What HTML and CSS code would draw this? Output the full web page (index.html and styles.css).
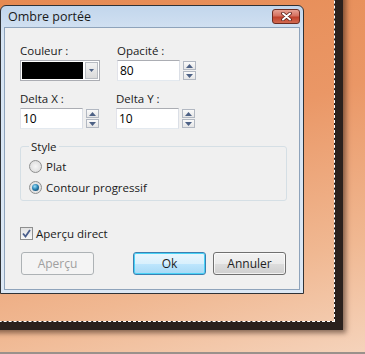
FILE: index.html
```html
<!DOCTYPE html>
<html lang="fr">
<head>
    <meta charset="UTF-8">
    <meta name="viewport" content="width=device-width, initial-scale=1.0">
    <title>Ombre portée</title>
    <link rel="stylesheet" href="styles.css">
</head>
<body>
    <div class="desktop">
        <!-- image being edited, only its lower right corner is visible -->
        <div class="canvas"></div>

        <div class="window">
            <div class="titlebar">
                <span class="title">Ombre portée</span>
                <button class="close" type="button" aria-label="Fermer">
                    <svg width="11" height="9" viewBox="0 0 11 9">
                        <path d="M2 1.5 L9 7.5 M9 1.5 L2 7.5" stroke="#5a1f18" stroke-width="3.6" stroke-linecap="round"/>
                        <path d="M2 1.5 L9 7.5 M9 1.5 L2 7.5" stroke="#fff" stroke-width="2" stroke-linecap="round"/>
                    </svg>
                </button>
            </div>

            <div class="content">
                <div class="row">
                    <div class="field">
                        <label>Couleur :</label>
                        <div class="combo">
                            <span class="swatch"></span>
                            <span class="drop">
                                <svg width="5" height="3" viewBox="0 0 5 3"><path d="M0 0 H5 L2.5 3 Z" fill="#4d6185"/></svg>
                            </span>
                        </div>
                    </div>
                    <div class="field">
                        <label>Opacité :</label>
                        <div class="spin">
                            <input type="text" value="80">
                            <div class="arrows">
                                <span class="arrow"><svg width="7" height="4" viewBox="0 0 7 4"><path d="M0 4 H7 L3.5 0 Z" fill="#4d6185"/></svg></span>
                                <span class="arrow"><svg width="7" height="4" viewBox="0 0 7 4"><path d="M0 0 H7 L3.5 4 Z" fill="#4d6185"/></svg></span>
                            </div>
                        </div>
                    </div>
                </div>

                <div class="row">
                    <div class="field">
                        <label>Delta X :</label>
                        <div class="spin">
                            <input type="text" value="10">
                            <div class="arrows">
                                <span class="arrow"><svg width="7" height="4" viewBox="0 0 7 4"><path d="M0 4 H7 L3.5 0 Z" fill="#4d6185"/></svg></span>
                                <span class="arrow"><svg width="7" height="4" viewBox="0 0 7 4"><path d="M0 0 H7 L3.5 4 Z" fill="#4d6185"/></svg></span>
                            </div>
                        </div>
                    </div>
                    <div class="field">
                        <label>Delta Y :</label>
                        <div class="spin">
                            <input type="text" value="10">
                            <div class="arrows">
                                <span class="arrow"><svg width="7" height="4" viewBox="0 0 7 4"><path d="M0 4 H7 L3.5 0 Z" fill="#4d6185"/></svg></span>
                                <span class="arrow"><svg width="7" height="4" viewBox="0 0 7 4"><path d="M0 0 H7 L3.5 4 Z" fill="#4d6185"/></svg></span>
                            </div>
                        </div>
                    </div>
                </div>

                <fieldset class="group">
                    <legend>Style</legend>
                    <div class="option"><span class="radio"></span>Plat</div>
                    <div class="option"><span class="radio checked"></span>Contour progressif</div>
                </fieldset>

                <div class="check-row">
                    <span class="checkbox">
                        <svg width="9" height="9" viewBox="0 0 9 9"><path d="M1 4.5 L3.5 7.5 L8 1" fill="none" stroke="#4a5e8c" stroke-width="1.8"/></svg>
                    </span>
                    Aperçu direct
                </div>

                <div class="buttons">
                    <button class="btn disabled" type="button">Aperçu</button>
                    <button class="btn default" type="button">Ok</button>
                    <button class="btn" type="button">Annuler</button>
                </div>
            </div>
        </div>
    </div>
    <div class="bottom-line"></div>
</body>
</html>
```

FILE: styles.css
```css
html, body {
    margin: 0;
    padding: 0;
}

body {
    width: 365px;
    height: 354px;
    overflow: hidden;
    font-family: "Open Sans", "Noto Sans", sans-serif;
    font-size: 11.5px;
    color: #1a1a1a;
    background: #9a918b;
}

.desktop {
    position: relative;
    height: 352px;
    overflow: hidden;
    background: linear-gradient(165deg, #e68a52 0%, #ea9766 40%, #f0b892 75%, #f5d3bb 100%);
}

.canvas {
    position: absolute;
    left: -20px;
    top: -20px;
    width: 354px;
    height: 341px;
    border-right: 9px solid #2b211d;
    border-bottom: 9px solid #2b211d;
    box-shadow: 3px 3px 5px rgba(50, 30, 20, 0.55);
}

.canvas::after {
    content: "";
    position: absolute;
    right: -1px;
    bottom: -1px;
    width: 400px;
    height: 400px;
    border-right: 1px dashed #fff;
    border-bottom: 1px dashed #fff;
}

.window {
    position: absolute;
    left: 0;
    top: 5px;
    width: 304px;
    height: 289px;
    box-sizing: border-box;
    border: 1px solid #2f3236;
    border-radius: 6px 6px 0 0;
    background: linear-gradient(#c2d6ec, #d6e4f3 30px, #dce8f5);
    display: flex;
    flex-direction: column;
}

.titlebar {
    height: 21px;
    display: flex;
    justify-content: space-between;
    align-items: flex-start;
    padding-left: 7px;
}

.title {
    font-size: 12.5px;
    line-height: 21px;
}

.close {
    margin: 3px 3px 0 0;
    width: 28px;
    height: 15px;
    padding: 0;
    border: 1px solid #6c2c22;
    border-radius: 3px;
    background: linear-gradient(#e7a193, #d57160 45%, #c0412c 55%, #d26a50);
    display: flex;
    align-items: center;
    justify-content: center;
}

.content {
    flex: 1;
    margin: 0 3px 3px 3px;
    border: 1px solid #8ea3bb;
    background: #f0f0f0;
    padding: 15px 0 0 15px;
}

.row {
    display: flex;
    gap: 17px;
    margin-bottom: 10px;
}

.field label {
    display: block;
    line-height: 15px;
    margin-bottom: 2px;
}

.combo {
    width: 80px;
    height: 21px;
    box-sizing: border-box;
    border: 1px solid #abadb3;
    background: #fff;
    display: flex;
    align-items: center;
    padding: 1px;
    gap: 2px;
}

.swatch {
    width: 62px;
    height: 17px;
    background: #000;
}

.drop {
    width: 13px;
    height: 17px;
    box-sizing: border-box;
    border: 1px solid #b8bcc2;
    background: linear-gradient(#f2f2f2, #dadada);
    display: flex;
    align-items: center;
    justify-content: center;
}

.spin {
    display: flex;
    gap: 3px;
}

.spin input {
    width: 63px;
    height: 21px;
    box-sizing: border-box;
    border: 1px solid #abadb3;
    border-color: #abadb3 #dbdfe6 #e3e9ef #e2e3ea;
    padding: 0 2px;
    font: inherit;
    font-size: 12px;
    color: #000;
    background: #fff;
    outline: none;
}

.arrows {
    display: flex;
    flex-direction: column;
    gap: 1px;
    padding-top: 1px;
}

.arrow {
    width: 13px;
    height: 9px;
    box-sizing: border-box;
    border: 1px solid #b2b8c2;
    background: linear-gradient(#fafafa, #e6e6e6);
    display: flex;
    align-items: center;
    justify-content: center;
}

.group {
    width: 267px;
    height: 62px;
    box-sizing: border-box;
    margin: 0;
    border: 1px solid #d5dfe5;
    border-radius: 3px;
    padding: 2px 8px 4px 8px;
}

.group legend {
    padding: 0 2px;
    line-height: 15px;
}

.option {
    display: flex;
    align-items: center;
    gap: 4px;
    height: 21px;
}

.radio {
    width: 13px;
    height: 13px;
    box-sizing: border-box;
    border-radius: 50%;
    border: 1px solid #8e8f8f;
    background: radial-gradient(circle at 50% 50%, #f6f6f6, #d6d6d6);
    display: flex;
    align-items: center;
    justify-content: center;
}

.radio.checked::after {
    content: "";
    width: 7px;
    height: 7px;
    border-radius: 50%;
    background: radial-gradient(circle at 40% 35%, #9ee0fa, #2d86b6 45%, #0e3c5e 90%);
}

.check-row {
    display: flex;
    align-items: center;
    gap: 3px;
    margin-top: 25px;
}

.checkbox {
    width: 13px;
    height: 13px;
    box-sizing: border-box;
    border: 1px solid #8e8f8f;
    background: linear-gradient(#e3e3e3, #f8f8f8);
    display: flex;
    align-items: center;
    justify-content: center;
}

.buttons {
    display: flex;
    margin-top: 11px;
    margin-left: 1px;
}

.btn {
    width: 73px;
    height: 23px;
    box-sizing: border-box;
    font: inherit;
    font-size: 12px;
    color: #1e1e1e;
    border: 1px solid #707070;
    border-radius: 3px;
    background: linear-gradient(#f2f2f2 0%, #ebebeb 50%, #dddddd 51%, #cfcfcf 100%);
    box-shadow: inset 0 0 0 1px rgba(255, 255, 255, 0.7);
    padding: 0;
}

.btn.disabled {
    color: #a0a0a0;
    border-color: #adb2b5;
    background: #f4f4f4;
    box-shadow: none;
}

.btn.default {
    margin-left: 39px;
    margin-right: 7px;
    border-color: #3c7fb1;
    background: linear-gradient(#eaf6fd 0%, #d9f0fc 50%, #bee6fd 51%, #a7d9f5 100%);
    box-shadow: inset 0 0 0 1px #48d2f6;
}

.bottom-line {
    height: 2px;
    background: #9a918b;
}
```
